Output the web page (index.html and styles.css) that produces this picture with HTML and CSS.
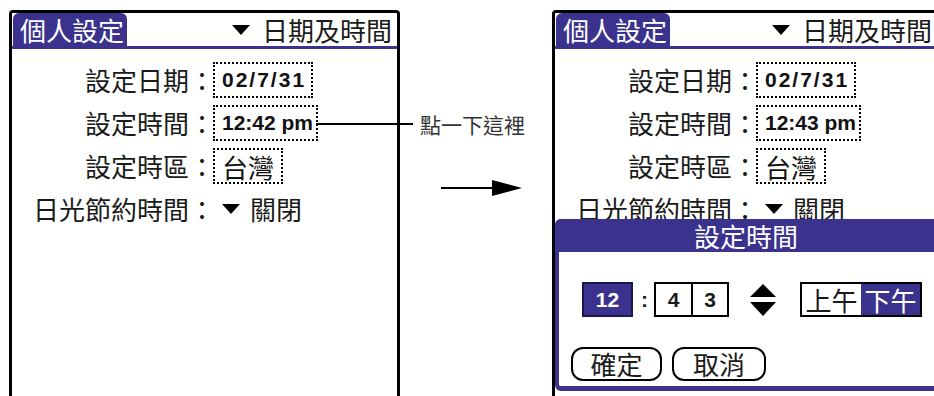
FILE: index.html
```html
<!DOCTYPE html>
<html lang="zh-Hant">

<head>
    <meta charset="UTF-8">
    <meta name="viewport" content="width=device-width, initial-scale=1.0">
    <title>個人設定 - 日期及時間</title>
    <link rel="stylesheet" href="styles.css">
</head>

<body>
    <div class="stage">
        <!-- before -->
        <div class="panel">
            <div class="panel-head">
                <div class="tab">個人設定</div>
                <div class="head-menu"><span class="tri"></span>日期及時間</div>
            </div>
            <div class="form">
                <div class="label">設定日期：</div>
                <div class="field field-date">02/7/31</div>
                <div class="label">設定時間：</div>
                <div class="field field-time">12:42 pm</div>
                <div class="label">設定時區：</div>
                <div class="field field-cjk">台灣</div>
                <div class="label">日光節約時間：</div>
                <div class="pick"><span class="tri"></span>關閉</div>
            </div>
        </div>

        <div class="notes">
            <div class="callout">點一下這裡</div>
            <div class="arrow">
                <div class="arrow-line"></div>
                <div class="arrow-head"></div>
            </div>
        </div>

        <!-- after -->
        <div class="panel panel-right">
            <div class="panel-head">
                <div class="tab">個人設定</div>
                <div class="head-menu"><span class="tri"></span>日期及時間</div>
            </div>
            <div class="form">
                <div class="label">設定日期：</div>
                <div class="field field-date">02/7/31</div>
                <div class="label">設定時間：</div>
                <div class="field field-time">12:43 pm</div>
                <div class="label">設定時區：</div>
                <div class="field field-cjk">台灣</div>
                <div class="label">日光節約時間：</div>
                <div class="pick"><span class="tri"></span>關閉</div>
            </div>

            <div class="dialog">
                <div class="dialog-title">設定時間</div>
                <div class="dialog-body">
                    <div class="controls">
                        <div class="hour">12</div>
                        <div class="colon">:</div>
                        <div class="minutes">
                            <div class="digit">4</div>
                            <div class="digit">3</div>
                        </div>
                        <div class="spinner">
                            <span class="up"></span>
                            <span class="down"></span>
                        </div>
                        <div class="ampm">
                            <div class="half">上午</div>
                            <div class="half half-on">下午</div>
                        </div>
                    </div>
                    <div class="buttons">
                        <div class="btn">確定</div>
                        <div class="btn btn-wide">取消</div>
                    </div>
                </div>
            </div>
        </div>
    </div>
</body>

</html>
```

FILE: styles.css
```css
* {
    box-sizing: border-box;
}

body {
    margin: 0;
    width: 934px;
    height: 396px;
    overflow: hidden;
    background-color: #ffffff;
    color: #1a1a1a;
    font-family: "Noto Sans CJK TC", "Noto Sans", sans-serif;
}

.stage {
    display: flex;
    align-items: flex-start;
    padding: 10px 0 0 9px;
}

.panel {
    position: relative;
    flex-shrink: 0;
    width: 391px;
    height: 400px;
    border: 3px solid #000;
    border-bottom: none;
    border-radius: 4px 4px 0 0;
}

.panel-right {
    width: 388px;
}

.panel-head {
    display: flex;
    align-items: flex-end;
    height: 36px;
    border-bottom: 3px solid #3a328c;
}

.tab {
    margin-left: 1px;
    padding: 0 3px 0 7px;
    height: 33px;
    line-height: 33px;
    font-size: 26px;
    color: #ffffff;
    background-color: #3a328c;
    border-radius: 6px 6px 0 0;
}

.head-menu {
    display: flex;
    align-items: center;
    gap: 12px;
    margin-left: auto;
    padding-right: 5px;
    height: 33px;
    font-size: 26px;
    line-height: 33px;
}

.tri {
    display: inline-block;
    width: 0;
    height: 0;
    border-top: 10px solid #000;
    border-left: 9px solid transparent;
    border-right: 9px solid transparent;
}

.form {
    display: grid;
    grid-template-columns: 203px auto;
    grid-auto-rows: 36px;
    row-gap: 7px;
    align-items: center;
    justify-content: start;
    padding-top: 13px;
}

.label {
    text-align: right;
    font-size: 26px;
    line-height: 1;
}

.field {
    justify-self: start;
    display: flex;
    align-items: center;
    height: 36px;
    margin-left: -2px;
    padding: 0 5px 0 7px;
    border: 2px dotted #000;
    font-family: "Liberation Sans", Arial, sans-serif;
    font-weight: bold;
    font-size: 21px;
    color: #111;
}

.field-date {
    letter-spacing: 2px;
}

.field-time {
    padding-right: 3px;
}

.field-cjk {
    padding: 0 7px;
    font-family: "Noto Sans CJK TC", sans-serif;
    font-weight: normal;
    font-size: 26px;
}

.pick {
    display: flex;
    align-items: center;
    gap: 10px;
    margin-left: 7px;
    font-size: 26px;
    line-height: 1;
}

/* annotations between the two screens */
.notes {
    flex-shrink: 0;
    width: 152px;
}

.callout {
    position: relative;
    margin: 102px 0 0 20px;
    height: 24px;
    line-height: 24px;
    font-size: 21px;
    color: #333;
}

.callout::before {
    content: "";
    position: absolute;
    left: -104px;
    top: 11px;
    width: 97px;
    height: 2px;
    background-color: #000;
}

.arrow {
    display: flex;
    align-items: center;
    margin: 44px 0 0 41px;
}

.arrow-line {
    width: 51px;
    height: 2px;
    background-color: #000;
}

.arrow-head {
    width: 0;
    height: 0;
    border-left: 30px solid #000;
    border-top: 8px solid transparent;
    border-bottom: 8px solid transparent;
}

/* time picker dialog, runs off the right edge of the page */
.dialog {
    position: absolute;
    top: 206px;
    left: 0;
    right: -20px;
    height: 172px;
    background-color: #ffffff;
    border: 4px solid #3a328c;
    border-top: none;
    border-bottom-width: 5px;
    border-radius: 6px;
}

.dialog-title {
    height: 33px;
    margin: 0 -4px;
    padding-right: 20px;
    line-height: 33px;
    text-align: center;
    font-size: 26px;
    color: #ffffff;
    background-color: #3a328c;
    border-radius: 6px 6px 0 0;
}

.dialog-body {
    padding: 30px 0 0 23px;
}

.controls {
    display: flex;
    align-items: center;
    height: 35px;
}

.hour,
.digit {
    display: flex;
    align-items: center;
    justify-content: center;
    font-family: "Liberation Sans", Arial, sans-serif;
    font-weight: bold;
    font-size: 21px;
}

.hour {
    width: 51px;
    height: 35px;
    color: #ffffff;
    background-color: #3a328c;
    border: 2px solid #1c1650;
}

.colon {
    margin: 0 6px 0 8px;
    font-family: "Liberation Sans", Arial, sans-serif;
    font-weight: bold;
    font-size: 21px;
}

.minutes {
    display: flex;
    height: 35px;
    border: 2px solid #000;
}

.digit {
    width: 35px;
}

.digit + .digit {
    width: 36px;
    border-left: 2px solid #000;
}

.spinner {
    display: flex;
    flex-direction: column;
    gap: 5px;
    margin-left: 21px;
}

.up,
.down {
    width: 0;
    height: 0;
    border-left: 13px solid transparent;
    border-right: 13px solid transparent;
}

.up {
    border-bottom: 13px solid #000;
}

.down {
    border-top: 14px solid #000;
}

.ampm {
    display: flex;
    height: 35px;
    margin-left: 24px;
    border: 2px solid #000;
}

.half {
    width: 59px;
    line-height: 31px;
    text-align: center;
    font-size: 26px;
}

.half-on {
    color: #ffffff;
    background-color: #3a328c;
}

.buttons {
    display: flex;
    gap: 10px;
    margin: 30px 0 0 -11px;
}

.btn {
    width: 91px;
    height: 34px;
    line-height: 30px;
    text-align: center;
    font-size: 26px;
    border: 2px solid #000;
    border-radius: 12px;
}

.btn-wide {
    width: 94px;
}
```
